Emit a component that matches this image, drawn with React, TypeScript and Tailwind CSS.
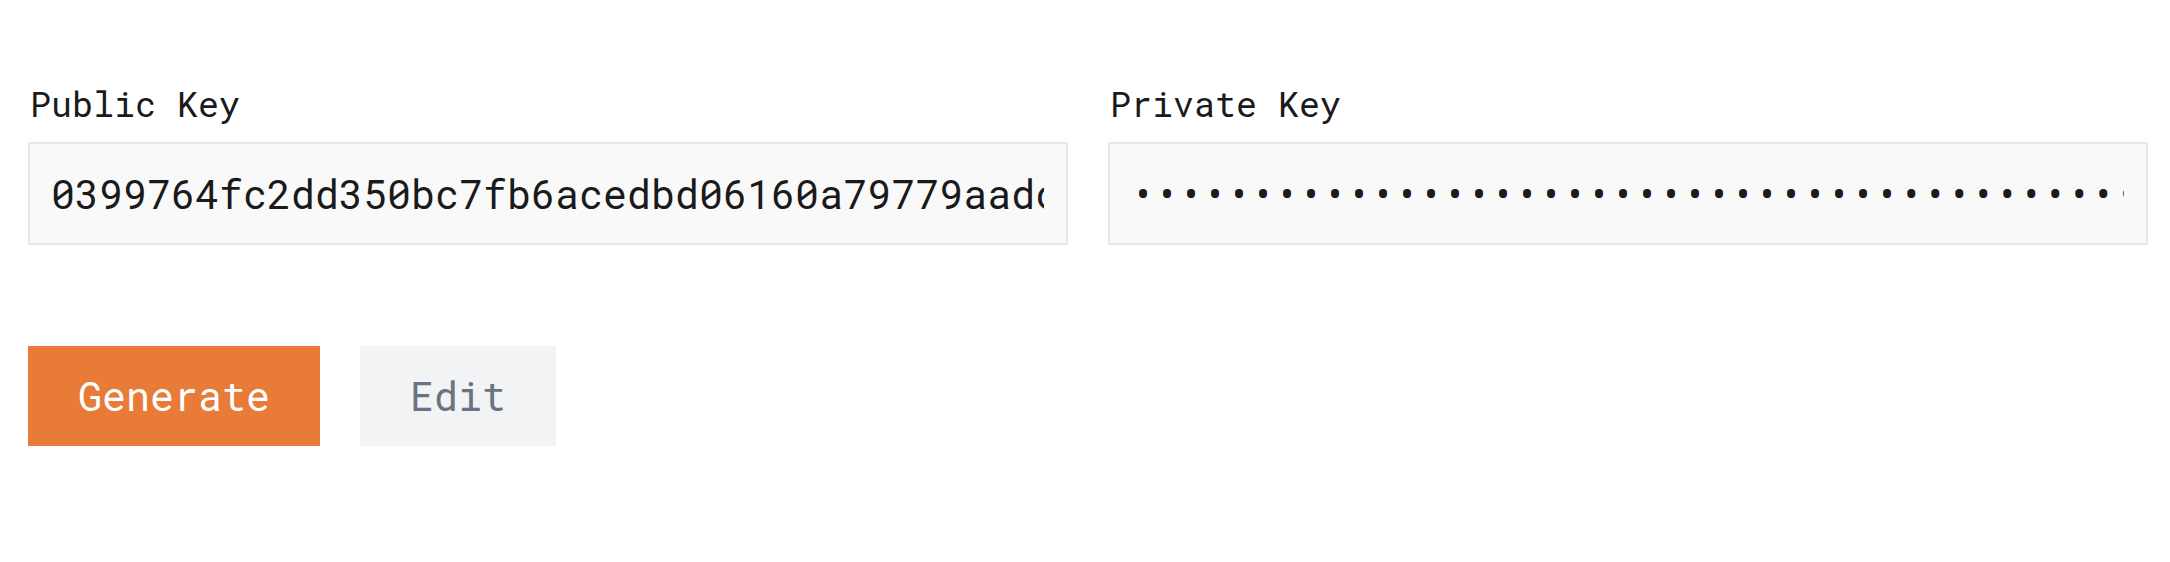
import { useState } from "react";

const mono = "font-['Roboto_Mono','Liberation_Mono','DejaVu_Sans_Mono',monospace]";

function KeyField({ label, value, secret }: { label: string; value: string; secret?: boolean }) {
  return (
    <label className="flex flex-col min-w-0">
      <span className={`${mono} text-[35px] leading-[52px] text-[#1a1a1a] mb-[13px] pl-[2px]`}>{label}</span>
      <input
        type={secret ? "password" : "text"}
        value={value}
        readOnly
        className={`${mono} w-full h-[103px] border-2 border-[#e6e6ec] bg-[#f9f9f9] pl-[21px] pr-[22px] text-[40px] text-[#1a1a1a] outline-none`}
      />
    </label>
  );
}

export default function App() {
  const [pub] = useState(
    "0399764fc2dd350bc7fb6acedbd06160a79779aadc3b5e04d1f7a2c8e9b0d416f2"
  );
  const [priv] = useState(
    "8f2a1c9e4b7d03562e1f8a9c7b4d2e0f6a3c5b8d9e1f2a4c6b8d0e2f4a6c8e0b"
  );

  return (
    <div className="w-[2170px] h-[562px] bg-white pt-[77px] pl-[28px] pr-[22px]">
      <div className="grid grid-cols-2 gap-[40px]">
        <KeyField label="Public Key" value={pub} />
        <KeyField label="Private Key" value={priv} secret />
      </div>
      <div className="flex gap-[40px] mt-[101px]">
        <button className={`${mono} h-[100px] px-[50px] bg-[#e77b37] text-white text-[40px]`}>
          Generate
        </button>
        <button className={`${mono} h-[100px] px-[50px] bg-[#f2f3f5] text-[#6b7280] text-[40px]`}>
          Edit
        </button>
      </div>
    </div>
  );
}
